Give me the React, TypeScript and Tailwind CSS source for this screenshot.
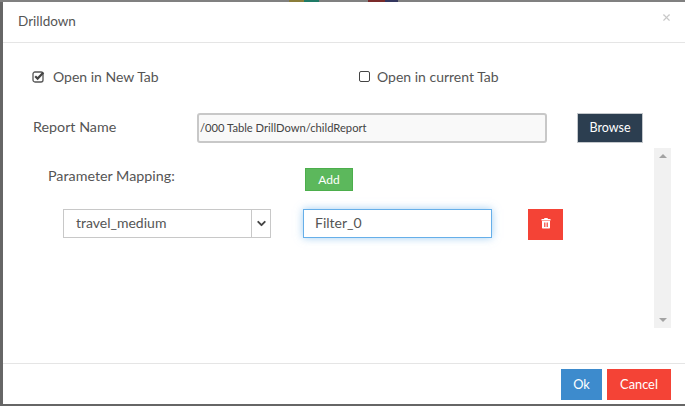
import { ChevronDown, X } from "lucide-react";

const font = "font-['Lato','Noto_Sans',sans-serif]";

// dim bits of the page behind the backdrop, visible above the modal
const strip = [
  { w: "w-[289px]", c: "bg-[#808080]" },
  { w: "w-[15px]", c: "bg-[#8a7d3a]" },
  { w: "w-[15px]", c: "bg-[#1f7a66]" },
  { w: "w-[49px]", c: "bg-[#808080]" },
  { w: "w-[17px]", c: "bg-[#7a2a2a]" },
  { w: "w-[13px]", c: "bg-[#33365e]" },
  { w: "flex-1", c: "bg-[#808080]" },
];

function CheckedBox() {
  return (
    <svg width="13" height="13" viewBox="0 0 13 13" className="-ml-[1px]">
      <rect x="1" y="2" width="10" height="10" rx="2" fill="none" stroke="#555" strokeWidth="1.3" />
      <path d="M3.2 6.2 L5.6 8.6 L11.4 2.4" fill="none" stroke="#444" strokeWidth="2.2" />
    </svg>
  );
}

function TrashIcon() {
  return (
    <svg width="10" height="12" viewBox="0 0 10 11" fill="currentColor" className="mb-[3px]">
      <path
        fillRule="evenodd"
        d="M3.5 0.5H6.5L7 1.5H9.5V3H0.5V1.5H3ZM1 3.5H9V10C9 10.6 8.6 11 8 11H2C1.4 11 1 10.6 1 10ZM3 5V9.5H3.8V5ZM4.6 5V9.5H5.4V5ZM6.2 5V9.5H7V5Z"
      />
    </svg>
  );
}

export default function App() {
  return (
    <div className={`h-[406px] w-[685px] overflow-hidden bg-[#666666] ${font}`}>
      <div className="flex h-[2px]">
        {strip.map((s, i) => (
          <div key={i} className={`${s.w} ${s.c}`} />
        ))}
      </div>
      {/* Modal */}
      <div className="ml-[3px] flex h-[402px] w-[682px] flex-col bg-white text-[#555]">
        <div className="flex h-[41px] shrink-0 items-center justify-between border-b border-[#e5e5e5] pl-[15px] pr-[13px]">
          <h4 className="text-[13.5px] leading-none">Drilldown</h4>
          <X size={11} className="mb-[10px] text-[#c8c8c8]" strokeWidth={2.5} />
        </div>

        <div className="flex min-h-0 flex-1 flex-col pl-[30px]">
          {/* Open mode */}
          <div className="mt-[20px] flex h-[26px] items-center text-[14px]">
            <div className="flex w-[326px] items-center">
              <CheckedBox />
              <span className="ml-[8px]">Open in New Tab</span>
            </div>
            <div className="flex items-center">
              <span className="h-[11px] w-[11px] rounded-[2px] border border-[#444]" />
              <span className="ml-[7px]">Open in current Tab</span>
            </div>
          </div>

          {/* Report name */}
          <div className="mt-[24px] flex items-center text-[14.3px]">
            <span className="w-[164px] pb-[2px]">Report Name</span>
            <div className="flex h-[30px] w-[350px] items-center rounded-[3px] border-2 border-[#c8c8c8] bg-[#f9f9f9] pl-[1px] text-[11.2px] text-[#444]">
              /000 Table DrillDown/childReport
            </div>
            <button className="ml-[30px] h-[30px] w-[66px] border border-[#c4c8cc] bg-[#2c3e50] text-[12.5px] text-white">
              Browse
            </button>
          </div>

          {/* Scrollable mapping area */}
          <div className="flex min-h-0 flex-1 pt-[5px]">
            <div className="w-[621px] pl-[15px]">
              <div className="mt-[20px] flex h-[23px] items-start text-[14.3px]">
                <span className="w-[257px] leading-[16px]">Parameter Mapping:</span>
                <button className="h-[23px] w-[48px] border border-[#4cae4c] bg-[#5cb85c] text-[12px] text-white">
                  Add
                </button>
              </div>
              <div className="mt-[18px] flex items-start pl-[15px] text-[14px]">
                <div className="flex h-[29px] w-[208px] border border-[#c8c8c8]">
                  <span className="flex flex-1 items-center pb-[3px] pl-[12px]">travel_medium</span>
                  <span className="flex w-[19px] items-center justify-center border-l border-[#c8c8c8]">
                    <ChevronDown size={13} strokeWidth={3.5} className="text-[#444]" />
                  </span>
                </div>
                <input
                  readOnly
                  value="Filter_0"
                  className="ml-[32px] h-[29px] w-[189px] border border-[#66afe9] pb-[3px] pl-[11px] shadow-[0_0_8px_rgba(102,175,233,0.6)] outline-none"
                />
                <button className="ml-[36px] flex h-[31px] w-[35px] items-center justify-center bg-[#f44336] text-white">
                  <TrashIcon />
                </button>
              </div>
            </div>
            <div className="flex h-[180px] w-[17px] flex-col items-center justify-between bg-[#f1f1f1] py-[6px]">
              <span className="h-0 w-0 border-x-[4px] border-b-[4px] border-x-transparent border-b-[#a3a3a3]" />
              <span className="h-0 w-0 border-x-[4px] border-t-[4px] border-x-transparent border-t-[#a3a3a3]" />
            </div>
          </div>
        </div>

        {/* Footer */}
        <div className="flex h-[41px] shrink-0 items-start justify-end gap-[5px] border-t border-[#e5e5e5] pr-[14px] pt-[5px] text-[12.8px] text-white">
          <button className="h-[31px] w-[41px] bg-[#3d8bcd]">Ok</button>
          <button className="h-[31px] w-[64px] bg-[#f44336]">Cancel</button>
        </div>
      </div>
    </div>
  );
}
